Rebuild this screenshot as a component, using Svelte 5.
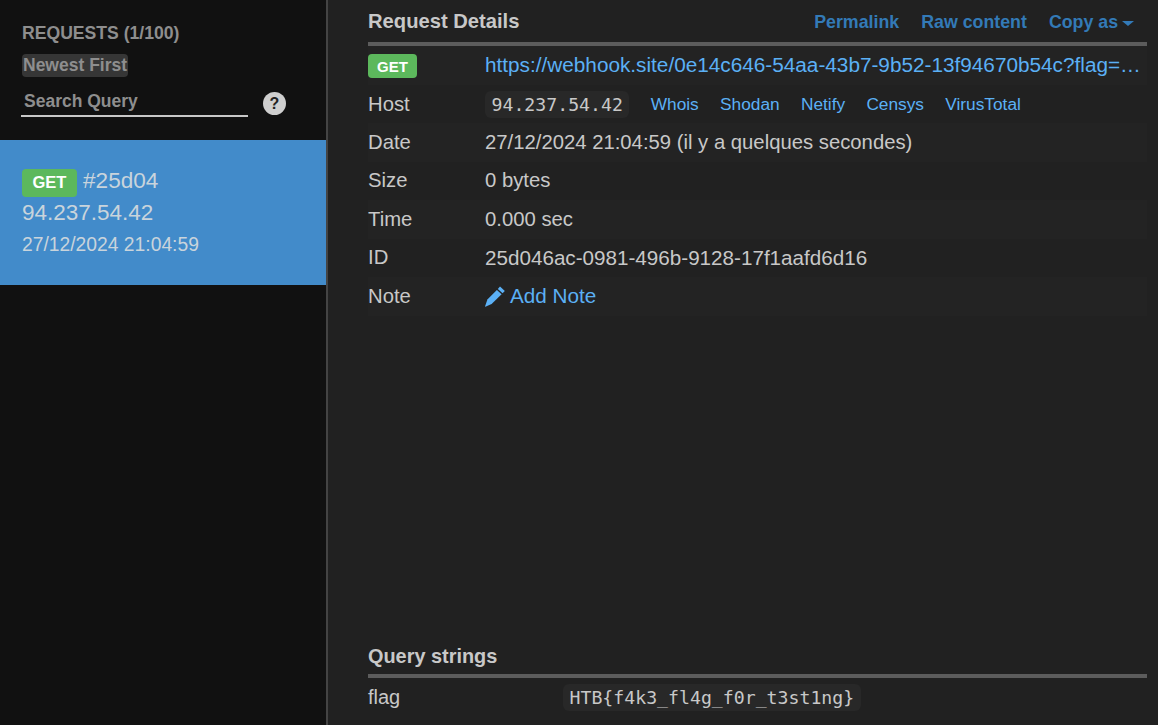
<script>
  const rows = [
    { label: "Date", value: "27/12/2024 21:04:59 (il y a quelques secondes)" },
    { label: "Size", value: "0 bytes" },
    { label: "Time", value: "0.000 sec" },
    { label: "ID", value: "25d046ac-0981-496b-9128-17f1aafd6d16" },
  ];
  const hostLinks = ["Whois", "Shodan", "Netify", "Censys", "VirusTotal"];
</script>

<div class="page">
  <aside class="sidebar">
    <div class="side-head">
      <h4>REQUESTS (1/100)</h4>
      <span class="sort">Newest First</span>
      <div class="search">
        <div class="search-input">Search Query</div>
        <span class="help">?</span>
      </div>
    </div>
    <div class="req-item">
      <div class="req-top"><span class="badge">GET</span> <span>#25d04</span></div>
      <div class="req-ip">94.237.54.42</div>
      <div class="req-date">27/12/2024 21:04:59</div>
    </div>
  </aside>

  <main class="main">
    <div class="section-head">
      <h3>Request Details</h3>
      <nav class="actions">
        <a href="#p">Permalink</a>
        <a href="#r">Raw content</a>
        <a href="#c">Copy as <i class="caret"></i></a>
      </nav>
    </div>

    <div class="table">
      <div class="row odd">
        <div class="label"><span class="badge">GET</span></div>
        <div class="value url"><a href="#u">https://webhook.site/0e14c646-54aa-43b7-9b52-13f94670b54c?flag=…</a></div>
      </div>
      <div class="row host-row">
        <div class="label">Host</div>
        <div class="value host">
          <code>94.237.54.42</code>
          {#each hostLinks as link}
            <a href="#h">{link}</a>
          {/each}
        </div>
      </div>
      {#each rows as row, i}
        <div class="row" class:odd={i % 2 === 0}>
          <div class="label">{row.label}</div>
          <div class="value" class:id-value={row.label === "ID"}>{row.value}</div>
        </div>
      {/each}
      <div class="row odd">
        <div class="label">Note</div>
        <div class="value">
          <a class="note" href="#n">
            <svg width="20" height="21" viewBox="0 0 20 21" aria-hidden="true">
              <path d="M15 .6 19.8 5 17.6 7.3 12.8 2.9Z" fill="currentColor" />
              <path d="M11.9 4 16.6 8.3 6.6 18 .4 20.8 0 20.4 2.4 13.6Z" fill="currentColor" />
            </svg>
            Add Note
          </a>
        </div>
      </div>
    </div>

    <div class="query">
      <h3 class="query-title">Query strings</h3>
      <div class="query-row">
        <div class="query-key">flag</div>
        <code>HTB&#123;f4k3_fl4g_f0r_t3st1ng&#125;</code>
      </div>
    </div>
  </main>
</div>

<style>
  :global(body) {
    margin: 0;
    background: #212121;
  }

  .page {
    display: flex;
    height: 725px;
    overflow: hidden;
    font-family: "Liberation Sans", Arial, sans-serif;
    color: #c8c8c8;
  }

  .sidebar {
    width: 326px;
    flex: none;
    background: #111;
    border-right: 2px solid #444;
  }

  .side-head {
    height: 140px;
    box-sizing: border-box;
    padding: 22px 0 0 22px;
  }

  h4 {
    margin: 0;
    font-size: 17.6px;
    line-height: 22px;
    color: #8e8e8e;
  }

  .sort {
    display: inline-block;
    margin-top: 10px;
    padding: 0 1px;
    background: #363636;
    border-radius: 4px;
    font-size: 17.5px;
    font-weight: bold;
    line-height: 23px;
    color: #8e8e8e;
  }

  .search {
    display: flex;
    align-items: center;
    margin-top: 12px;
  }

  .search-input {
    width: 227px;
    margin-left: -1px;
    padding: 1px 0 2px 3px;
    box-sizing: border-box;
    border-bottom: 2px solid #c8c8c8;
    font-size: 17.5px;
    font-weight: bold;
    line-height: 23px;
    color: #8e8e8e;
  }

  .help {
    width: 23px;
    height: 23px;
    margin-left: 15px;
    border-radius: 50%;
    background: #cfcfcf;
    color: #222;
    font-size: 16px;
    font-weight: bold;
    line-height: 23px;
    text-align: center;
  }

  .req-item {
    height: 145px;
    box-sizing: border-box;
    padding: 26px 0 0 22px;
    background: #428bca;
    color: #c9d4dc;
  }

  .req-top {
    display: flex;
    align-items: center;
    gap: 6px;
    height: 30px;
    font-size: 22.6px;
  }

  .req-top .badge {
    margin-top: 3px;
  }

  .req-ip {
    font-size: 22.5px;
    line-height: 33px;
  }

  .req-date {
    margin-top: 3px;
    font-size: 19.3px;
    line-height: 26px;
  }

  .badge {
    display: inline-block;
    width: 55px;
    height: 28px;
    background: #5cb85c;
    border-radius: 4px;
    color: #fff;
    font-size: 16.5px;
    font-weight: bold;
    line-height: 27px;
    text-align: center;
  }

  .main {
    flex: 1;
    min-width: 0;
    display: flex;
    flex-direction: column;
    padding: 0 11px 0 40px;
  }

  .section-head {
    display: flex;
    align-items: baseline;
    justify-content: space-between;
    height: 46px;
    box-sizing: border-box;
    padding-top: 8px;
    border-bottom: 4px solid #5c5c5c;
  }

  h3 {
    margin: 0;
    font-size: 20.2px;
    line-height: 26px;
    color: #c8c8c8;
  }

  .actions {
    display: flex;
    gap: 22px;
    padding-right: 13px;
    font-size: 17.8px;
    font-weight: bold;
  }

  .actions a {
    color: #337ab7;
    text-decoration: none;
  }

  .caret {
    display: inline-block;
    margin-left: -1px;
    vertical-align: 2px;
    border-top: 5px solid #337ab7;
    border-left: 6px solid transparent;
    border-right: 6px solid transparent;
  }

  .row {
    display: flex;
    align-items: center;
    height: 38.5px;
    font-size: 20.3px;
  }

  .row.odd {
    background: #232323;
  }

  .host-row {
    padding-top: 1px;
    box-sizing: border-box;
  }

  .label {
    width: 117px;
    flex: none;
  }

  .label .badge {
    display: block;
    width: 49px;
    height: 24px;
    margin-top: 2px;
    font-size: 15px;
    line-height: 25px;
  }

  .value {
    flex: 1;
    min-width: 0;
  }

  .id-value {
    font-size: 20.65px;
  }

  .url {
    white-space: nowrap;
    font-size: 20.75px;
    color: #5bb0f5;
  }

  a {
    color: #5bb0f5;
    text-decoration: none;
  }

  .host {
    display: flex;
    align-items: center;
    font-size: 17.3px;
  }

  .host a {
    margin-left: 21.3px;
  }

  code {
    padding: 3px 6.5px;
    background: #282828;
    border-radius: 6px;
    font-family: "DejaVu Sans Mono", monospace;
    font-size: 18.2px;
    line-height: 21px;
  }

  .note {
    display: flex;
    align-items: center;
    gap: 5px;
    font-size: 20.7px;
  }

  .query {
    margin-top: auto;
    padding-bottom: 8px;
  }

  .query-title {
    padding-bottom: 3px;
    border-bottom: 4px solid #5c5c5c;
    font-size: 19.9px;
    line-height: 30px;
  }

  .query-row {
    display: flex;
    align-items: center;
    height: 39px;
    font-size: 20px;
  }

  .query-key {
    width: 195px;
    flex: none;
  }
</style>
